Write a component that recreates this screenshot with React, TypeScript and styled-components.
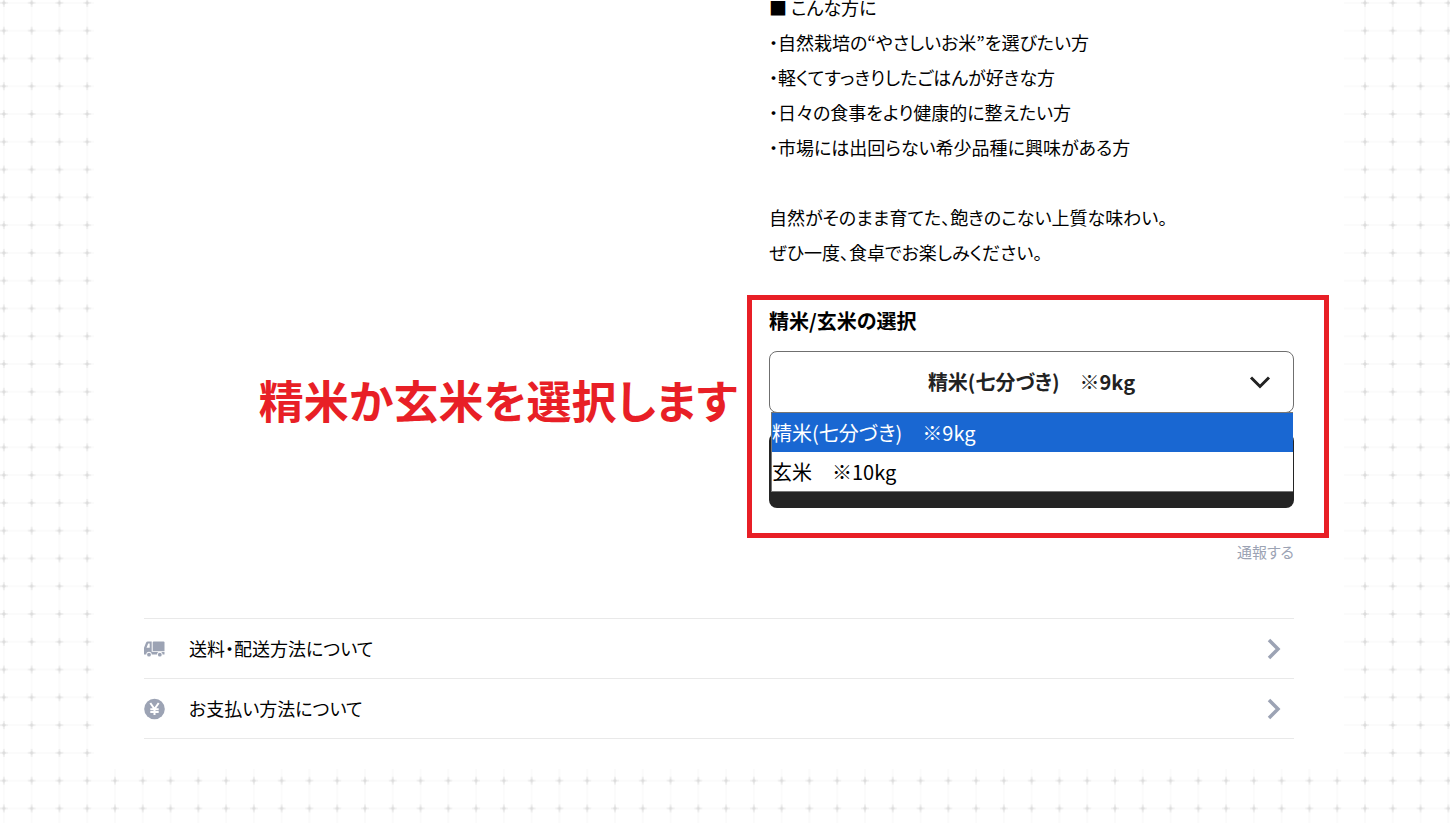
import React, { useState } from "react";
import styled, { createGlobalStyle } from "styled-components";

const gridTile = encodeURIComponent(
  `<svg xmlns="http://www.w3.org/2000/svg" width="250" height="250" viewBox="0 0 9 9">
    <defs>
      <pattern id="p" width="1" height="1" patternUnits="userSpaceOnUse">
        <path d="M.5 0V1M0 .5H1" stroke="#fafafa" stroke-width=".05"/>
        <path d="M.5 .36V.64M.36 .5H.64" stroke="#ececec" stroke-width=".06"/>
        <circle cx=".5" cy=".5" r=".06" fill="#dcdcdc"/>
      </pattern>
    </defs>
    <rect width="9" height="9" fill="url(#p)"/>
  </svg>`
);

const GlobalStyle = createGlobalStyle`
  *, *::before, *::after { box-sizing: border-box; }
  body {
    margin: 0;
    overflow: hidden;
    color: #000;
    background: #fff url("data:image/svg+xml,${gridTile}") -10px -11px;
    font-family: "Noto Sans CJK JP", "Noto Sans", sans-serif;
    font-feature-settings: "palt";
    font-size: 18px;
  }
  button, select { font: inherit; font-feature-settings: inherit; color: inherit; }
`;

const Page = styled.div`
  min-height: 100vh;
  padding: 0 12px 55px 0;
`;

const Panel = styled.main`
  max-width: 1250px;
  margin: 0 auto;
  padding: 0 50px 30px;
  background: #fff;
`;

const Columns = styled.div`
  display: flex;
  justify-content: flex-end;
`;

const Details = styled.div`
  width: 525px;
`;

const Description = styled.div`
  margin-top: -10px;
  line-height: 35px;
  white-space: nowrap;
`;

const Paragraph = styled.p`
  margin: 0 0 35px;
`;

const Form = styled.form`
  position: relative;
  padding-bottom: 30px;
`;

const OptionLabel = styled.label`
  display: block;
  margin-bottom: 14px;
  font-size: 20px;
  font-weight: 700;
  line-height: 32px;
`;

const SelectWrap = styled.div`
  position: relative;
  margin-bottom: 20px;
`;

const Select = styled.select`
  display: block;
  width: 100%;
  height: 62px;
  padding: 0 0 2px;
  appearance: none;
  border: 1px solid #6f6f6f;
  border-radius: 8px;
  background: #fff;
  color: #222;
  font-size: 20px;
  font-weight: 700;
  text-align: center;
  text-align-last: center;
`;

const SelectArrow = styled.svg`
  position: absolute;
  top: 24px;
  right: 23px;
  pointer-events: none;
`;

const OptionList = styled.ul`
  position: absolute;
  z-index: 1;
  top: 61px;
  left: 2px;
  right: 1px;
  margin: 0;
  padding: 0;
  border: 1px solid #767676;
  border-right: 0;
  background: #fff;
  list-style: none;
`;

const Option = styled.li<{ $active: boolean }>`
  font-size: 20px;
  line-height: 39px;
  color: ${(p) => (p.$active ? "#fff" : "#000")};
  background: ${(p) => (p.$active ? "#1967d2" : "#fff")};
`;

const CartButton = styled.button`
  display: block;
  width: 100%;
  height: 75px;
  border: 0;
  border-radius: 8px;
  background: #242424;
`;

const Highlight = styled.div`
  position: absolute;
  inset: -10px -35px 0 -22px;
  border: 5px solid #e81f26;
  pointer-events: none;
`;

const Callout = styled.p`
  position: absolute;
  right: 100%;
  top: 60px;
  margin: 0 32px 0 0;
  color: #e81f26;
  font-size: 45px;
  font-weight: 700;
  line-height: 70px;
  white-space: nowrap;
`;

const ReportRow = styled.div`
  display: flex;
  justify-content: flex-end;
  padding: 3px 0 56px;
`;

const ReportLink = styled.a`
  color: #9ca3b4;
  font-size: 15px;
  line-height: 21px;
  text-decoration: none;
`;

const InfoList = styled.ul`
  margin: 0;
  padding: 0;
  border-top: 1px solid #e9e9e9;
  list-style: none;
`;

const InfoButton = styled.button`
  display: flex;
  align-items: center;
  gap: 23px;
  width: 100%;
  height: 60px;
  padding: 0 13px 0 0;
  border: 0;
  border-bottom: 1px solid #e9e9e9;
  background: none;
  text-align: left;
`;

const InfoText = styled.span`
  flex: 1;
  padding-bottom: 2px;
`;

const TruckIcon = () => (
  <svg width="22" height="22" viewBox="0 0 22 22" fill="#9ca3b4" aria-hidden="true">
    <path
      fillRule="evenodd"
      d="M3.800 3.500H7.700V13.800H20.500V16.500H0V9.800L2 4.800Q2.500 3.500 3.800 3.500ZM4.200 5.600L2.500 9.800H5.700V5.600Z"
    />
    <path d="M8.700 4.500Q8.700 3.500 9.700 3.500H19.500Q20.500 3.500 20.500 4.500V13H8.700Z" />
    <circle cx="5" cy="16.500" r="2.700" fill="#fff" />
    <circle cx="15.800" cy="16.500" r="2.700" fill="#fff" />
    <circle cx="5" cy="16.700" r="1.900" />
    <circle cx="15.800" cy="16.700" r="1.900" />
  </svg>
);

const YenIcon = () => (
  <svg width="22" height="22" viewBox="0 0 22 22" aria-hidden="true">
    <circle cx="10.500" cy="11" r="10.300" fill="#9ca3b4" />
    <path
      d="M6.300 5L10.500 11L14.700 5M10.500 11V17M6.300 11.200H14.700M6.300 14H14.700"
      fill="none"
      stroke="#fff"
      strokeWidth="2"
    />
  </svg>
);

const Chevron = () => (
  <svg width="14" height="22" viewBox="0 0 14 22" aria-hidden="true">
    <path d="M2 2L11 11L2 20" fill="none" stroke="#9ca3b4" strokeWidth="3.500" />
  </svg>
);

const options = ["精米(七分づき)　※9kg", "玄米　※10kg"];

const infoItems = [
  { text: "送料・配送方法について", Icon: TruckIcon },
  { text: "お支払い方法について", Icon: YenIcon },
];

export default function App() {
  const [selected, setSelected] = useState(options[0]);

  return (
    <>
      <GlobalStyle />
      <Page>
        <Panel>
          <Columns>
            <Details>
              <Description>
                <Paragraph>
                  ■ こんな方に
                  <br />
                  ・自然栽培の“やさしいお米”を選びたい方
                  <br />
                  ・軽くてすっきりしたごはんが好きな方
                  <br />
                  ・日々の食事をより健康的に整えたい方
                  <br />
                  ・市場には出回らない希少品種に興味がある方
                </Paragraph>
                <Paragraph>
                  自然がそのまま育てた、飽きのこない上質な味わい。
                  <br />
                  ぜひ一度、食卓でお楽しみください。
                </Paragraph>
              </Description>
              <Form onSubmit={(e) => e.preventDefault()}>
                <OptionLabel htmlFor="variation">精米/玄米の選択</OptionLabel>
                <SelectWrap>
                  <Select
                    id="variation"
                    value={selected}
                    onChange={(e) => setSelected(e.target.value)}
                  >
                    {options.map((o) => (
                      <option key={o}>{o}</option>
                    ))}
                  </Select>
                  <SelectArrow width="22" height="16" viewBox="0 0 22 16" aria-hidden="true">
                    <path d="M2 2.500L11 11.500L20 2.500" fill="none" stroke="#222" strokeWidth="3" />
                  </SelectArrow>
                  <OptionList role="listbox">
                    {options.map((o) => (
                      <Option
                        key={o}
                        role="option"
                        aria-selected={o === selected}
                        $active={o === selected}
                        onClick={() => setSelected(o)}
                      >
                        {o}
                      </Option>
                    ))}
                  </OptionList>
                </SelectWrap>
                <CartButton type="submit" />
                <Highlight />
                <Callout>精米か玄米を選択します</Callout>
              </Form>
              <ReportRow>
                <ReportLink href="#report">通報する</ReportLink>
              </ReportRow>
            </Details>
          </Columns>
          <InfoList>
            {infoItems.map(({ text, Icon }) => (
              <li key={text}>
                <InfoButton type="button">
                  <Icon />
                  <InfoText>{text}</InfoText>
                  <Chevron />
                </InfoButton>
              </li>
            ))}
          </InfoList>
        </Panel>
      </Page>
    </>
  );
}
